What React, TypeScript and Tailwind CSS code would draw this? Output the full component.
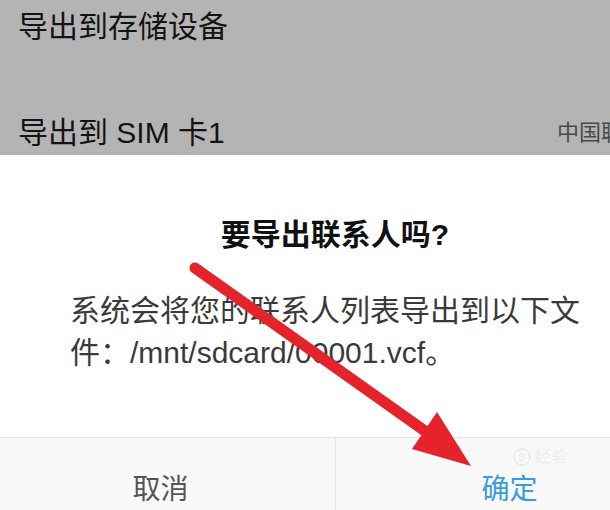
import React from 'react'

const FONT = '"Liberation Sans", "Noto Sans CJK SC", sans-serif'

export default function App() {
  return (
    <div
      className="relative h-[510px] w-[610px] overflow-hidden bg-white"
      style={{ fontFamily: FONT }}
    >
      <div className="w-[670px]">
        {/* 背景列表（变暗） */}
        <div className="h-[155px] bg-[#b4b4b4] pl-[18px] pr-[25px] text-[#141414]">
          <div className="pt-[12px] text-[30px] leading-none">导出到存储设备</div>
          <div className="mt-[76px] flex items-center justify-between">
            <span className="text-[30px] leading-none">导出到 SIM 卡1</span>
            <span className="text-[22px] leading-none text-[#4a4a4a]">中国联通</span>
          </div>
        </div>

        {/* 对话框 */}
        <div className="bg-white">
          <div className="pt-[65px] text-center text-[30px] font-bold leading-none text-[#111]">
            要导出联系人吗?
          </div>
          <p className="mt-[40px] px-[70px] text-[30px] leading-[42px] text-[#3a3a3a]">
            系统会将您的联系人列表导出到以下文件：/mnt/sdcard/00001.vcf。
          </p>
          <div className="mt-[63px] h-px bg-[#e2e2e2]" />
          <div className="flex h-[104px] bg-[#f9f9f9] text-[28px]">
            <div className="flex flex-1 items-center justify-center pr-[14px] text-[#555]">
              取消
            </div>
            <div className="w-px bg-[#e4e4e4]" />
            <div className="relative flex flex-1 items-center justify-center pl-[13px] text-[#3a9be0]">
              确定
              <span className="absolute left-[177px] top-[10px] flex items-center gap-1 text-[16px] leading-none text-[#ececec]">
                <span className="flex h-[18px] w-[18px] items-center justify-center rounded-full border-2 border-[#ececec] text-[11px] font-bold">
                  S
                </span>
                经验
              </span>
            </div>
          </div>
        </div>
      </div>

      {/* 红色箭头标注 */}
      <svg
        className="pointer-events-none absolute left-0 top-0"
        width="610"
        height="510"
        viewBox="0 0 610 510"
      >
        <line
          x1="195"
          y1="268"
          x2="432"
          y2="436"
          stroke="#e4232b"
          strokeWidth="11"
          strokeLinecap="round"
        />
        <polygon points="437,412 412,449 471,466" fill="#e4232b" />
      </svg>
    </div>
  )
}
